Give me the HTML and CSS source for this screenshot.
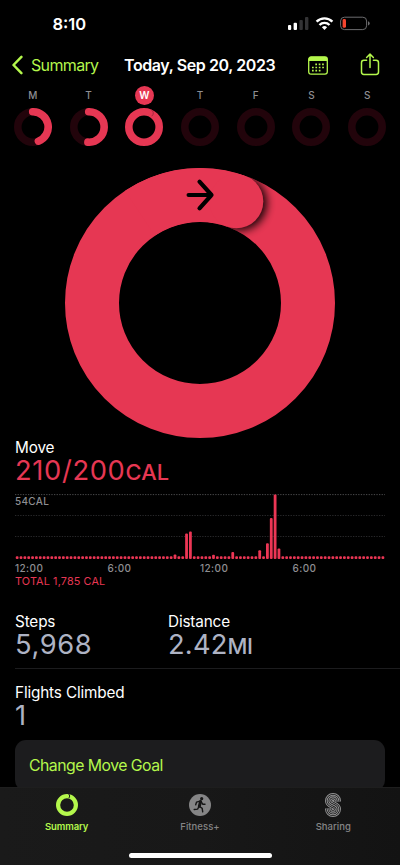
FILE: index.html
```html
<!DOCTYPE html>
<html lang="en">
<head>
<meta charset="utf-8">
<title>Activity</title>
<link rel="stylesheet" href="styles.css">
</head>
<body>
<div class="phone">
  <header class="status">
    <span class="clock">8:10</span>
    <svg class="status-icons" width="84" height="16" viewBox="287 15 84 16">
      <g fill="#fff"><rect x="288" y="25" width="3.2" height="5" rx="1"/><rect x="293.6" y="22.7" width="3.4" height="7.3" rx="1"/></g>
      <g fill="#333335"><rect x="299.4" y="20" width="3.4" height="10" rx="1"/><rect x="305" y="17" width="3.4" height="13" rx="1"/></g>
      <g fill="none" stroke="#fff" stroke-width="2.4">
        <path d="M316.6 21.6a11.2 11.2 0 0 1 15.8 0"/>
        <path d="M319.5 25a7 7 0 0 1 10 0"/>
      </g>
      <path d="M321.9 27.2a3.9 3.9 0 0 1 5.2 0L324.5 30z" fill="#fff"/>
      <rect x="340.6" y="17.2" width="26" height="12.4" rx="3.8" fill="none" stroke="#6c6c6e"/>
      <path d="M368 21.3q1.7.6 1.7 2.1t-1.7 2.1z" fill="#6c6c6e"/>
      <rect x="342.6" y="19" width="3.4" height="8.8" rx="1.4" fill="#f4452f"/>
    </svg>
  </header>

  <nav class="nav">
    <a class="back">
      <svg width="12" height="20" viewBox="0 0 12 20"><path d="M10.4 1.900L2.500 10l7.900 8.100" fill="none" stroke="#b4f74c" stroke-width="2.500" stroke-linecap="round" stroke-linejoin="round"/></svg>
      <span>Summary</span>
    </a>
    <h1 class="title">Today, Sep 20, 2023</h1>
    <svg class="calendar" width="20" height="19" viewBox="0 0 20 19">
      <rect x=".7" y=".9" width="18.600" height="17.200" rx="2.400" fill="none" stroke="#b4f74c" stroke-width="1.300"/>
      <path d="M.7 5V3Q.7.7 3 .7h14q2.300 0 2.300 2.300v2z" fill="#b4f74c"/>
      <path d="M7.300 8.300h9.200M4 11.500h12.500M4 14.700h9.200" stroke="#b4f74c" stroke-width="1.700" stroke-dasharray="1.700 1.700"/>
    </svg>
    <svg class="share" width="20" height="25" viewBox="0 0 20 25">
      <path d="M6.600 7.300H3.900Q1.500 7.300 1.500 9.700v9.400q0 2.400 2.400 2.400h12.200q2.400 0 2.400-2.400v-9.400q0-2.400-2.400-2.400h-2.700M10 14.500V1.300M6.600 4.500L10 1.100l3.400 3.400" fill="none" stroke="#b4f74c" stroke-width="1.500" stroke-linecap="round" stroke-linejoin="round"/>
    </svg>
  </nav>

  <section class="week">
    <div class="day"><span class="letter">M</span><svg class="mini" viewBox="-19 -19 38 38"><circle class="track" r="15.200"/><path class="arc" d="M-.3-15.200A15.200 15.200 0 0 1 5.400 14.200"/></svg></div>
    <div class="day"><span class="letter">T</span><svg class="mini" viewBox="-19 -19 38 38"><circle class="track" r="15.200"/><path class="arc" d="M-.3-15.200A15.200 15.200 0 1 1-1.100 15.160"/></svg></div>
    <div class="day"><span class="letter today">W</span><svg class="mini" viewBox="-19 -19 38 38"><circle class="full" r="15.200"/><path d="M7.200-17.200Q11.200-14.500 7.800-10.800" fill="none" stroke="#a42740"/></svg></div>
    <div class="day"><span class="letter">T</span><svg class="mini" viewBox="-19 -19 38 38"><circle class="track" r="15.200"/></svg></div>
    <div class="day"><span class="letter">F</span><svg class="mini" viewBox="-19 -19 38 38"><circle class="track" r="15.200"/></svg></div>
    <div class="day"><span class="letter">S</span><svg class="mini" viewBox="-19 -19 38 38"><circle class="track" r="15.200"/></svg></div>
    <div class="day"><span class="letter">S</span><svg class="mini" viewBox="-19 -19 38 38"><circle class="track" r="15.200"/></svg></div>
  </section>

  <svg class="ring" width="270" height="270" viewBox="-135 -135 270 270">
    <defs>
      <clipPath id="band"><path clip-rule="evenodd" d="M-135 0a135 135 0 1 1 270 0a135 135 0 1 1-270 0zM-81 0a81 81 0 1 0 162 0a81 81 0 1 0-162 0z"/></clipPath>
      <filter id="soft" x="-50%" y="-50%" width="200%" height="200%"><feGaussianBlur stdDeviation="4"/></filter>
    </defs>
    <circle r="108" fill="none" stroke="#e63753" stroke-width="54"/>
    <g clip-path="url(#band)">
      <circle cx="39.500" cy="-100" r="27.500" fill="#000" opacity=".9" filter="url(#soft)"/>
      <path d="M-60-89.800A108 108 0 0 1 36.300-101.700" fill="none" stroke="#e63753" stroke-width="54"/>
      <circle cx="36.300" cy="-101.700" r="27" fill="#e63753"/>
    </g>
    <path d="M-11.400-108H11.500M-.5-121.300L11.500-108L-.5-94.700" fill="none" stroke="#000" stroke-width="4.200" stroke-linecap="round" stroke-linejoin="round"/>
  </svg>

  <main class="details">
    <section class="metric">
      <h2 class="label">Move</h2>
      <p class="value move"><span class="number">210/200</span><span class="unit">CAL</span></p>
    </section>

    <section class="chart">
      <div class="plot">
        <svg class="grid" width="370" height="65" viewBox="0 0 370 65">
          <path d="M0 .6H370" stroke="#4a4a4c" stroke-dasharray="1.300 1.300"/>
          <path d="M0 21.500H370M0 42.500H370" stroke="#29292b" stroke-dasharray="1.300 1.300"/>
        </svg>
        <span class="peak">54CAL</span>
        <svg class="bars" id="bars" width="370" height="65" viewBox="0 0 370 65"></svg>
      </div>
      <div class="axis"><span>12:00</span><span>6:00</span><span>12:00</span><span>6:00</span></div>
      <p class="total">TOTAL 1,785 CAL</p>
    </section>

    <section class="stats">
      <div class="metric"><h2 class="label">Steps</h2><p class="value"><span class="number">5,968</span></p></div>
      <div class="metric"><h2 class="label">Distance</h2><p class="value distance"><span class="number">2.42</span><span class="unit">MI</span></p></div>
    </section>
    <section class="flights metric"><h2 class="label">Flights Climbed</h2><p class="value"><span class="number">1</span></p></section>
    <div class="goal"><span>Change Move Goal</span></div>
  </main>

  <footer class="tabbar">
    <div class="tabs">
      <a class="tab active">
        <svg width="24" height="26" viewBox="-12 -13 24 26"><circle r="8.900" fill="none" stroke="#b4f74c" stroke-width="4.200"/><path d="M1.700-11.200Q3.700-9 1.900-6.800" fill="none" stroke="#1a1a1a" stroke-width="1"/></svg>
        <span>Summary</span>
      </a>
      <a class="tab fitness">
        <svg width="24" height="26" viewBox="-12 -13 24 26">
          <circle r="11" fill="#858586"/>
          <circle cx="1.700" cy="-6.300" r="1.600" fill="#161616"/>
          <path d="M.6-3.500L-.7 1.300" stroke="#161616" stroke-width="3" stroke-linecap="round"/>
          <path d="M0-3.900L-3.500-2.800L-4.300-.2M1.400-3L2.700-.8L5-.7M-.4 1.500L2.200 3.300L2.700 6.900M-1 1.500L-2.400 4.100L-5.800 4.500" fill="none" stroke="#161616" stroke-width="1.400" stroke-linecap="round" stroke-linejoin="round"/>
        </svg>
        <span>Fitness+</span>
      </a>
      <a class="tab sharing">
        <svg width="24" height="26" viewBox="-4 -1 24 26">
          <defs><path id="swirl" d="M12.100 8.600V8A4.100 4.100 0 0 0 3.900 8C3.900 12.400 12.100 11.600 12.100 16A4.100 4.100 0 0 1 3.900 16V15.400"/></defs>
          <g fill="none" stroke-linecap="butt">
            <use href="#swirl" stroke="#929293" stroke-width="7.800"/>
            <use href="#swirl" stroke="#141414" stroke-width="5.900"/>
            <use href="#swirl" stroke="#929293" stroke-width="4.500"/>
            <use href="#swirl" stroke="#141414" stroke-width="2.500"/>
            <use href="#swirl" stroke="#929293" stroke-width="1.100"/>
          </g>
        </svg>
        <span>Sharing</span>
      </a>
    </div>
    <div class="home"></div>
  </footer>
</div>
<script src="chart.js"></script>
</body>
</html>
```
FILE: chart.js
```js
// One bar per quarter hour; quiet intervals keep the minimum height.
const active = {41: 4.5, 44: 25.5, 45: 27.5, 51: 4.2, 56: 7, 63: 8.7, 65: 15.7, 66: 41, 67: 64.5, 68: 10.5};
const bars = document.getElementById("bars");
for (let i = 0; i < 96; i++) {
  const height = active[i] || 2.8;
  const bar = document.createElementNS("http://www.w3.org/2000/svg", "rect");
  bar.setAttribute("x", (0.75 + i * 3.85).toFixed(2));
  bar.setAttribute("y", 65 - height);
  bar.setAttribute("width", 2.8);
  bar.setAttribute("height", height);
  bar.setAttribute("rx", 1);
  bars.appendChild(bar);
}
```
FILE: styles.css
```css
* { box-sizing: border-box; margin: 0; padding: 0; }
body { background: #000; color: #fff; font-family: Inter, "Liberation Sans", sans-serif; }
svg { display: block; flex: none; }
span { white-space: nowrap; }
.phone { width: 400px; height: 865px; overflow: hidden; display: flex; flex-direction: column; background: #000; }

.status { height: 48px; flex: none; display: flex; justify-content: space-between; padding: 15px 29px 0 52.5px; }
.clock { font-size: 16.5px; font-weight: 600; line-height: 18px; letter-spacing: 0; }

.nav { height: 34px; flex: none; display: flex; align-items: center; padding-left: 11px; }
.back { display: flex; align-items: center; gap: 8px; width: 113px; color: #b4f74c; font-size: 16px; letter-spacing: -.65px; }
.title { width: 184px; font-size: 16px; font-weight: 600; letter-spacing: -.4px; white-space: nowrap; }
.share { margin-left: 32px; }

.week { height: 68px; flex: none; display: flex; padding: 4px 5px 0; }
.day { flex: 1; display: flex; flex-direction: column; align-items: center; gap: 3px; }
.letter { width: 19px; height: 19px; border-radius: 50%; text-align: center; font-size: 10px; font-weight: 500; line-height: 19px; color: #8e8e92; }
.today { background: #e63753; color: #fff; font-weight: 600; }
.mini { width: 38px; height: 38px; }
.mini .track, .mini .full, .mini .arc { fill: none; stroke-width: 7.6px; stroke: #e63753; stroke-linecap: round; }
.mini .track { stroke: #22040b; }

.ring { margin: 18px auto 0; }

.details { height: 349px; flex: none; padding: 1px 0 0 15px; overflow: hidden; }
.label { font-size: 15.3px; font-weight: 400; line-height: 18px; letter-spacing: -.15px; white-space: nowrap; }
.value { display: flex; align-items: baseline; height: 28px; line-height: 28px; font-size: 27.3px; color: #aeb3c4; }
.number { letter-spacing: .6px; }
.unit { font-size: 21.8px; font-weight: 500; }
.distance .number { letter-spacing: .2px; }
.distance .unit { letter-spacing: -.6px; }
.move { color: #e63753; }
.move .number { letter-spacing: .65px; }
.move .unit { letter-spacing: .2px; }

.chart { width: 370px; margin-top: 9px; }
.plot { height: 65px; display: grid; }
.plot > * { grid-area: 1 / 1; }
.peak { font-size: 10px; font-weight: 500; line-height: 15px; letter-spacing: .3px; color: #8e8e92; }
.bars { fill: #ec3655; }
.axis { margin-top: 3px; display: grid; grid-template-columns: repeat(4, 92.5px); font-size: 10px; font-weight: 500; line-height: 13px; color: #8e8e92; letter-spacing: .4px; }
.total { font-size: 10.8px; line-height: 13px; letter-spacing: .15px; color: #e63753; }

.stats { display: grid; grid-template-columns: 153px 1fr; margin-top: 25px; padding-bottom: 9px; border-bottom: 1px solid #1c1c1e; }
.flights { padding-top: 15px; }
.goal { width: 370px; height: 51px; margin-top: 10px; padding: 0 14px; border-radius: 11px; background: #1c1c1e; color: #b4f74c; font-size: 15.8px; line-height: 51px; letter-spacing: -.52px; }

.tabbar { height: 78px; flex: none; background: linear-gradient(90deg, #1a1a1a, #181818 50%, #131313); border-top: 1px solid #1e1e1e; }
.tabs { display: grid; grid-template-columns: repeat(3, 1fr); padding-top: 4px; }
.tab { display: flex; flex-direction: column; align-items: center; color: #858586; font-size: 9.5px; font-weight: 500; line-height: 12px; letter-spacing: .05px; gap: 3px; }
.active { color: #b4f74c; font-weight: 600; letter-spacing: -.1px; }
.home { width: 143px; height: 5px; margin: 20px auto 0; border-radius: 3px; background: #fff; }
```
